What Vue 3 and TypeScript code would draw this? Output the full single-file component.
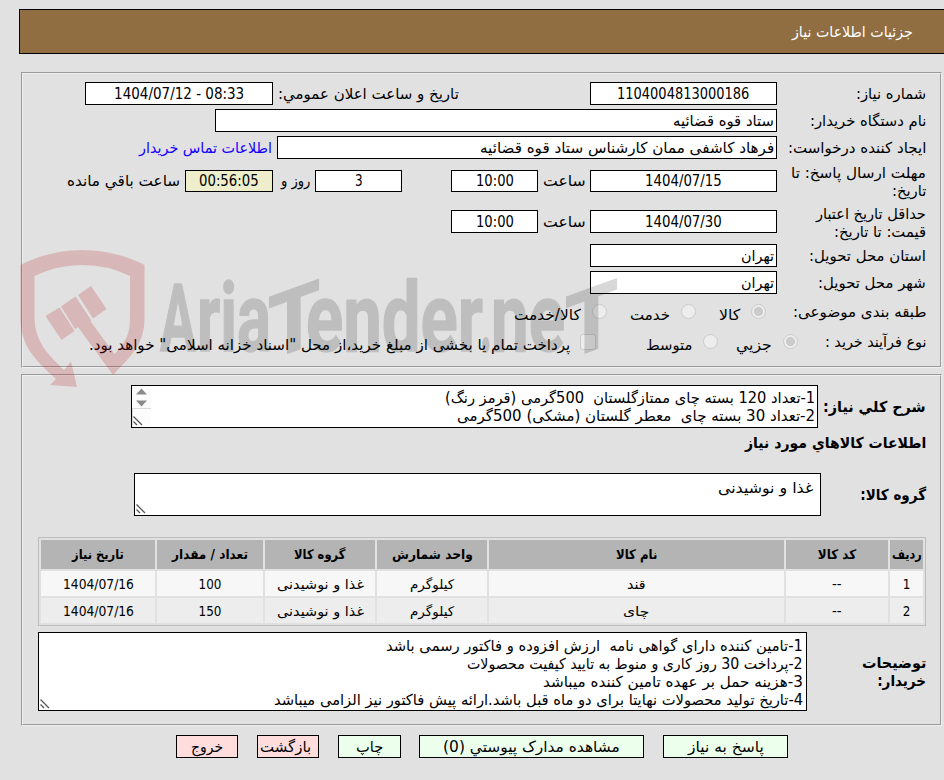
<script setup lang="ts">
import type { Directive } from 'vue'

interface Column { title: string; width: number; fit: number }
interface Cell { text: string; fit: number }
interface Line { text: string; fit: number }
interface Action { text: string; fit: number; kind: string }

// Condenses or widens a run of text horizontally so that it takes the given width.
const vFit: Directive<HTMLElement, number> = {
  mounted(el, binding) {
    const natural = el.offsetWidth
    if (!natural) return
    el.style.transform = `scaleX(${binding.value / natural})`
    el.style.marginLeft = `${binding.value - natural}px`
  },
}

const columns: Column[] = [
  { title: 'ردیف', width: 33, fit: 30 },
  { title: 'کد کالا', width: 102, fit: 38 },
  { title: 'نام کالا', width: 295, fit: 41 },
  { title: 'واحد شمارش', width: 110, fit: 81 },
  { title: 'گروه کالا', width: 110, fit: 51 },
  { title: 'تعداد / مقدار', width: 106, fit: 76 },
  { title: 'تاریخ نیاز', width: 114, fit: 52 },
]

const rows: Cell[][] = [
  [
    { text: '1', fit: 8 }, { text: '--', fit: 10 }, { text: 'قند', fit: 19 }, { text: 'کیلوگرم', fit: 44 },
    { text: 'غذا و نوشیدنی', fit: 87 }, { text: '100', fit: 23 }, { text: '1404/07/16', fit: 71 },
  ],
  [
    { text: '2', fit: 8 }, { text: '--', fit: 10 }, { text: 'چای', fit: 26 }, { text: 'کیلوگرم', fit: 44 },
    { text: 'غذا و نوشیدنی', fit: 87 }, { text: '150', fit: 23 }, { text: '1404/07/16', fit: 71 },
  ],
]

const summary: Line[] = [
  { text: '1-تعداد 120 بسته چای ممتازگلستان  500گرمی (قرمز رنگ)', fit: 370 },
  { text: '2-تعداد 30 بسته چای  معطر گلستان (مشکی) 500گرمی', fit: 358 },
]

const notes: Line[] = [
  { text: '1-تامین کننده دارای گواهی نامه  ارزش افزوده و فاکتور رسمی باشد', fit: 417 },
  { text: '2-پرداخت 30 روز کاری و منوط به تایید کیفیت محصولات', fit: 336 },
  { text: '3-هزینه حمل بر عهده تامین کننده میباشد', fit: 260 },
  { text: '4-تاریخ تولید محصولات نهایتا برای دو ماه قبل باشد.ارائه پیش فاکتور نیز الزامی میباشد', fit: 529 },
]

const actions: Action[] = [
  { text: 'پاسخ به نیاز', fit: 76, kind: 'reply' },
  { text: 'مشاهده مدارک پیوستي (0)', fit: 177, kind: 'files' },
  { text: 'چاپ', fit: 27, kind: 'print' },
  { text: 'بازگشت', fit: 51, kind: 'back' },
  { text: 'خروج', fit: 32, kind: 'exit' },
]
</script>

<template>
  <div class="page" dir="rtl">
    <header class="title"><span v-fit="121" class="t">جزئیات اطلاعات نیاز</span></header>

    <section class="panel details">
      <div class="row r1">
        <div class="label"><span v-fit="70" class="t">شماره نیاز:</span></div>
        <div class="field w187 center"><span v-fit="132" class="t">1104004813000186</span></div>
        <span v-fit="181" class="t announce">تاریخ و ساعت اعلان عمومي:</span>
        <div class="field w188 center"><span v-fit="130" class="t" dir="ltr">1404/07/12 - 08:33</span></div>
      </div>
      <div class="row r2">
        <div class="label"><span v-fit="116" class="t">نام دستگاه خریدار:</span></div>
        <div class="field w562"><span v-fit="101" class="t">ستاد قوه قضائیه</span></div>
      </div>
      <div class="row r2">
        <div class="label"><span v-fit="138" class="t">ایجاد کننده درخواست:</span></div>
        <div class="field w500"><span v-fit="294" class="t">فرهاد کاشفی ممان کارشناس ستاد قوه قضائیه</span></div>
        <a v-fit="133" class="t link">اطلاعات تماس خریدار</a>
      </div>
      <div class="row r4">
        <div class="label two">
          <span v-fit="135" class="t">مهلت ارسال پاسخ: تا</span>
          <span v-fit="34" class="t">تاریخ:</span>
        </div>
        <div class="field w187 center"><span v-fit="77" class="t">1404/07/15</span></div>
        <span v-fit="43" class="t hour">ساعت</span>
        <div class="field w87 center"><span v-fit="38" class="t">10:00</span></div>
        <div class="field w87 center days"><span v-fit="8" class="t">3</span></div>
        <span v-fit="29" class="t dayword">روز و</span>
        <div class="field w88 center timer"><span v-fit="60" class="t">00:56:05</span></div>
        <span v-fit="113" class="t left-word">ساعت باقي مانده</span>
      </div>
      <div class="row r5">
        <div class="label two">
          <span v-fit="110" class="t">حداقل تاریخ اعتبار</span>
          <span v-fit="92" class="t">قیمت: تا تاریخ:</span>
        </div>
        <div class="field w187 center"><span v-fit="77" class="t">1404/07/30</span></div>
        <span v-fit="43" class="t hour">ساعت</span>
        <div class="field w87 center"><span v-fit="38" class="t">10:00</span></div>
      </div>
      <div class="row r6">
        <div class="label"><span v-fit="117" class="t">استان محل تحویل:</span></div>
        <div class="field w187"><span v-fit="33" class="t">تهران</span></div>
      </div>
      <div class="row r2">
        <div class="label"><span v-fit="108" class="t">شهر محل تحویل:</span></div>
        <div class="field w187"><span v-fit="33" class="t">تهران</span></div>
      </div>
      <div class="row r8">
        <div class="label kind"><span v-fit="133" class="t">طبقه بندی موضوعی:</span></div>
        <i class="radio on"></i><div class="opt o48"><span v-fit="21" class="t">کالا</span></div>
        <i class="radio"></i><div class="opt o47"><span v-fit="40" class="t">خدمت</span></div>
        <i class="radio"></i><div class="opt"><span v-fit="67" class="t">کالا/خدمت</span></div>
      </div>
      <div class="row r9">
        <div class="label process"><span v-fit="101" class="t">نوع فرآیند خرید :</span></div>
        <i class="radio on"></i><div class="opt o38"><span v-fit="36" class="t">جزيي</span></div>
        <i class="radio"></i><div class="opt o80"><span v-fit="46" class="t">متوسط</span></div>
        <i class="check"></i><div class="opt pay"><span v-fit="481" class="t">پرداخت تمام یا بخشی از مبلغ خرید،از محل "اسناد خزانه اسلامی" خواهد بود.</span></div>
      </div>
    </section>

    <section class="panel goods">
      <div class="line summary">
        <b v-fit="103" class="t">شرح کلي نياز:</b>
        <div class="area">
          <div v-for="l in summary" :key="l.text" class="al"><span v-fit="l.fit" class="t">{{ l.text }}</span></div>
          <svg class="scroll" width="19" height="41" viewBox="0 0 19 41">
            <rect width="19" height="41" fill="#fcfcfc" />
            <path d="M4 8.5 9.5 2.5 15 8.5ZM4 14.5h11L9.500 20.500Z" fill="#8b8b8b" />
            <path d="M0 22.500h19M.5 22v19" stroke="#dcdcdc" fill="none" />
          </svg>
          <svg class="grip" width="10" height="10" viewBox="0 0 10 10"><path d="M.5.5 9 9M.5 5.500 4 9" /></svg>
        </div>
      </div>
      <div class="line heading"><b v-fit="181" class="t">اطلاعات کالاهاي مورد نياز</b></div>
      <div class="line group">
        <b v-fit="66" class="t">گروه کالا:</b>
        <div class="area">
          <div class="al"><span v-fit="95" class="t">غذا و نوشیدنی</span></div>
          <svg class="grip" width="10" height="10" viewBox="0 0 10 10"><path d="M.5.5 9 9M.5 5.500 4 9" /></svg>
        </div>
      </div>

      <table class="items">
        <colgroup><col v-for="c in columns" :key="c.title" :style="{ width: c.width + 'px' }" /></colgroup>
        <thead>
          <tr><th v-for="c in columns" :key="c.title"><span v-fit="c.fit" class="t">{{ c.title }}</span></th></tr>
        </thead>
        <tbody>
          <tr v-for="(r, i) in rows" :key="i">
            <td v-for="(c, j) in r" :key="j"><span v-fit="c.fit" class="t">{{ c.text }}</span></td>
          </tr>
        </tbody>
      </table>

      <div class="line notes">
        <div class="notes-label">
          <b v-fit="64" class="t">توضیحات</b>
          <b v-fit="49" class="t">خریدار:</b>
        </div>
        <div class="area">
          <div v-for="l in notes" :key="l.text" class="al"><span v-fit="l.fit" class="t">{{ l.text }}</span></div>
          <svg class="grip" width="10" height="10" viewBox="0 0 10 10"><path d="M.5.5 9 9M.5 5.500 4 9" /></svg>
        </div>
      </div>
    </section>

    <footer class="actions">
      <button v-for="a in actions" :key="a.kind" :class="['btn', a.kind]"><span v-fit="a.fit" class="t">{{ a.text }}</span></button>
    </footer>

    <svg class="watermark" width="604" height="142" viewBox="18 248 604 142" direction="ltr">
      <g fill="#b41419" opacity=".2">
        <path d="M20.500 265Q50 250 82 250Q115 250 144.500 265V318C144.500 345 130 357 113 375L78 327L75 329L61 306.500L75.500 296.500L91 320V322L114.500 354C126 342 130 334 130 318V276Q108 265 82 265Q57 265 34.500 276V318C35 341 47 354 64 370L71 361.500L77 387L50 385L56 379C34 359 20.500 345 20.500 318Z" />
        <path d="M45.500 316 59.500 307.500 74.500 331 61.500 340ZM78 295 91 286 106.500 309 93 318.500Z" />
      </g>
      <g class="word" opacity=".15">
        <text x="160" y="351" font-size="95" textLength="36" lengthAdjust="spacingAndGlyphs">A</text>
        <text x="197" y="351" font-size="96" textLength="74" lengthAdjust="spacingAndGlyphs">ria</text>
        <text x="268" y="0" font-size="88" textLength="52" lengthAdjust="spacingAndGlyphs" transform="translate(0 458) skewY(-20)">T</text>
        <text x="306" y="351" font-size="96" textLength="177" lengthAdjust="spacingAndGlyphs">ender</text>
        <text x="480" y="351" font-size="96" textLength="12" lengthAdjust="spacingAndGlyphs">.</text>
        <text x="491" y="351" font-size="96" textLength="74" lengthAdjust="spacingAndGlyphs">ne</text>
        <text x="565" y="0" font-size="88" textLength="53" lengthAdjust="spacingAndGlyphs" transform="translate(0 566) skewY(-20)">T</text>
      </g>
    </svg>
  </div>
</template>

<style>
body { background: #e1e1e1; overflow: hidden; }
</style>

<style scoped>
.page {
  position: relative; box-sizing: border-box; width: 944px; height: 780px; padding: 9px 0 0 19px;
  overflow: hidden; background: #e1e1e1; color: #000;
  font: 15px/18px "DejaVu Sans Condensed", "DejaVu Sans", sans-serif;
}
.page * { box-sizing: border-box; }
.t { display: inline-block; flex: none; white-space: pre; transform-origin: 100% 50%; }
.title {
  height: 45px; border: 1px solid #000; border-right: 0; background: #906e41; color: #fff;
  display: flex; align-items: center; padding-right: 31px;
}
.panel { width: 921px; margin-right: 2px; border: 2px groove #eee; }
.details { height: 296px; margin-top: 18px; padding: 8px 14px 0 0; }
.goods { height: 352px; margin-top: 6px; padding: 9px 14px 0 0; }
.row { display: flex; align-items: center; height: 23px; }
.r2 { margin-top: 4px; }
.r4 { height: 22px; margin-top: 11px; }
.r5 { margin-top: 18px; }
.r6 { margin-top: 11px; }
.r8 { height: 15px; margin-top: 10px; }
.r9 { height: 15px; margin-top: 15px; }
.label { width: 149px; flex: none; display: flex; }
.label.two { flex-direction: column; align-items: flex-start; padding-top: 2px; }
.label.kind { width: 160px; }
.label.process { width: 128px; }
.field { flex: none; height: 100%; border: 1px solid #000; background: #fff; display: flex; align-items: center; padding: 0 2px; }
.center { justify-content: center; }
.w87 { width: 87px; } .w88 { width: 88px; } .w187 { width: 187px; } .w188 { width: 188px; }
.w500 { width: 500px; } .w562 { width: 562px; }
.announce { margin-right: 131px; }
.announce + .field { margin-right: 5px; }
.link { color: #1400ff; margin-right: 5px; }
.hour { margin-right: 4px; }
.hour + .field { margin-right: 5px; }
.days { margin-right: 49px; }
.dayword { margin-right: 5px; }
.timer { margin-right: 8px; background: #eeeecc; }
.left-word { margin-right: 5px; }
.radio, .check { flex: none; width: 15px; height: 15px; border: 1px solid #cbcbcb; border-radius: 50%; background: #ededed; }
.radio.on { background: radial-gradient(circle, #cbcbcb 4.2px, #ededed 4.9px); }
.check { width: 16px; height: 16px; border-radius: 3px; }
.opt { flex: none; padding: 6px 11px 0 0; }
.o48 { width: 55px; } .o47 { width: 74px; } .o38 { width: 65px; } .o80 { width: 107px; }
.pay { padding-right: 10px; }
.line { display: flex; align-items: center; }
.line b { font-size: 15px; }
.area { position: relative; flex: none; border: 1px solid #000; background: #fff; }
.al { height: 18px; display: flex; }
.summary { height: 43px; }
.summary .area { width: 687px; height: 43px; margin-right: 5px; padding: 3px 2px; }
.scroll { position: absolute; left: 0; top: 0; }
.grip { position: absolute; left: 1px; bottom: 1px; fill: none; stroke: #555; stroke-width: 1.300; }
.heading { height: 18px; margin-top: 6px; }
.group { height: 43px; margin-top: 21px; }
.group .area { width: 687px; height: 43px; margin-right: 39px; padding: 5px 7px; }
.items {
  width: 888px; margin-top: 21px; border: 1px solid #bdbdbd; border-spacing: 2px; table-layout: fixed;
  font-size: 13.300px; line-height: 18px;
}
.items th, .items td { padding: 0; text-align: center; vertical-align: middle; }
.items th { height: 29px; background: #b4b4b4; }
.items td { height: 25px; padding-top: 2px; background: #f7f7f7; }
.items tr:nth-child(2) td { background: #ededed; }
.notes { height: 79px; margin-top: 6px; }
.notes-label { width: 119px; flex: none; display: flex; flex-direction: column; align-items: flex-start; }
.notes .area { width: 769px; height: 79px; padding: 4px 3px; }
.actions { display: flex; padding-right: 156px; margin-top: 9px; }
.btn {
  flex: none; height: 23px; padding: 0; border: 1px solid #000; background: #ecffec; color: #000; font: inherit;
  display: flex; align-items: center; justify-content: center;
}
.reply { width: 125px; }
.files { width: 225px; margin-right: 19px; }
.print { width: 63px; margin-right: 18px; }
.back { width: 62px; margin-right: 19px; background: #ffdddd; padding-right: 5px; }
.exit { width: 62px; margin-right: 19px; background: #ffdddd; }
.watermark { position: absolute; left: 18px; top: 248px; pointer-events: none; }
.word { font-family: Roboto, sans-serif; font-weight: 700; fill: #000; stroke: #000; stroke-width: 1.500; }
</style>
